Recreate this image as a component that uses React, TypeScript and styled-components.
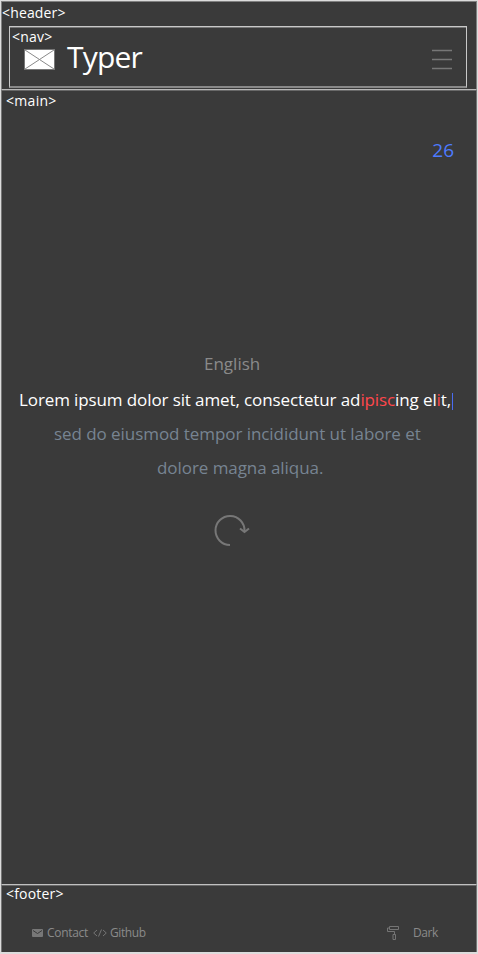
import React from "react";
import styled, { createGlobalStyle } from "styled-components";

const GlobalStyle = createGlobalStyle`
  * { box-sizing: border-box; }
  body {
    margin: 0;
    background: #3a3a3a;
    font-family: "Open Sans", "Noto Sans", sans-serif;
    color: #fff;
  }
`;

const Page = styled.div`
  width: 478px;
  height: 954px;
  display: grid;
  grid-template-rows: 88px 795px 1fr;
  border: 1px solid #dcdcdc;
  border-bottom-width: 2px;
  background: #3a3a3a;
  overflow: hidden;
`;

const Text = styled.span<{ $size: number; $spacing?: number; $color?: string; $weight?: number }>`
  font-size: ${(p) => p.$size}px;
  font-weight: ${(p) => p.$weight ?? 400};
  line-height: 1;
  letter-spacing: ${(p) => p.$spacing ?? 0}px;
  color: ${(p) => p.$color ?? "#fff"};
  white-space: nowrap;
`;

const Header = styled.header`
  border: 1px solid #808080;
  border-bottom: 0;
  padding-top: 4px;
  display: flex;
  flex-direction: column;
`;

const HeaderTag = styled(Text)`
  height: 20px;
`;

const Nav = styled.nav`
  width: 458px;
  height: 62px;
  margin-left: 7px;
  border: 1px solid #c8c8c8;
  border-bottom: 2px solid #898989;
  box-shadow: inset 0 1px #777;
  padding: 3px 13px 0 2px;
  display: grid;
  grid-template-rows: 14px 1fr;
`;

const NavRow = styled.div`
  display: flex;
  align-items: flex-start;
  padding-left: 12px;
`;

const Envelope = styled.svg`
  display: block;
  margin-top: 5px;
`;

const Brand = styled(Text)`
  margin: -2px auto 0 12px;
`;

const Menu = styled.svg`
  display: block;
  margin-top: 5px;
`;

const Main = styled.main`
  border: 1px solid #757575;
  border-top: 1px solid #b8b8b8;
  border-bottom: 0;
  box-shadow: inset 0 1px #686868;
  display: flex;
  flex-direction: column;
  padding: 4px 0 0 4px;
`;

const Counter = styled(Text)`
  align-self: flex-end;
  margin: 33px 22px 0 0;
`;

const Typing = styled.section`
  display: flex;
  flex-direction: column;
  margin-top: 195px;
`;

const Line = styled(Text)<{ $left: number; $height: number }>`
  margin-left: ${(p) => p.$left}px;
  height: ${(p) => p.$height}px;
`;

const Miss = styled.span`
  color: #ff474c;
`;

const Caret = styled.span`
  display: inline-block;
  width: 1.2px;
  height: 17px;
  margin-left: 0.5px;
  vertical-align: -4px;
  background: #4a6cf0;
`;

const Restart = styled.svg`
  display: block;
  margin: 21px 0 0 207px;
`;

const Footer = styled.footer`
  border: 1px solid #757575;
  border-top: 1px solid #c0c0c0;
  border-bottom: 0;
  box-shadow: inset 0 1px #686868;
  padding: 2px 38px 0 4px;
  display: flex;
  flex-direction: column;
`;

const FooterRow = styled.div`
  display: flex;
  align-items: center;
  margin-top: 24px;
  padding-left: 26px;
`;

const FooterLink = styled.div<{ $gap: number; $left?: string }>`
  display: flex;
  align-items: center;
  gap: ${(p) => p.$gap}px;
  margin-left: ${(p) => p.$left ?? "0"};
`;

export default function App() {
  return (
    <>
      <GlobalStyle />
      <Page>
        <Header>
          <HeaderTag $size={14} $weight={500} $spacing={0.15}>&lt;header&gt;</HeaderTag>
          <Nav>
            <Text $size={14} $weight={500} $spacing={0.25}>&lt;nav&gt;</Text>
            <NavRow>
              <Envelope width="31" height="21" viewBox="0 0 31 21">
                <rect x="0.5" y="0.5" width="30" height="20" fill="#fff" stroke="#777" />
                <path d="M1 1L30 20M30 1L1 20" stroke="#8a8a8a" fill="none" />
              </Envelope>
              <Brand $size={30} $weight={500} $spacing={-0.8}>Typer</Brand>
              <Menu width="21" height="21" viewBox="0 0 21 21">
                <path d="M0 1.5H20M0 10.5H20M0 19.5H20" stroke="#777" strokeWidth="1.3" />
              </Menu>
            </NavRow>
          </Nav>
        </Header>
        <Main>
          <Text $size={14} $weight={500} $spacing={0.3}>&lt;main&gt;</Text>
          <Counter $size={19} $weight={500} $color="#4d7bff">26</Counter>
          <Typing>
            <Line $size={17} $left={198} $height={36} $color="#8a8a8a">English</Line>
            <Line $size={17} $left={13} $height={34} $weight={500} $spacing={-0.11}>
              Lorem ipsum dolor sit amet, consectetur ad<Miss>ipisc</Miss>ing el<Miss>i</Miss>t,
              <Caret />
            </Line>
            <Line $size={17} $left={48} $height={34} $color="#778492" $spacing={-0.06}>
              sed do eiusmod tempor incididunt ut labore et
            </Line>
            <Line $size={17} $left={151} $height={34} $color="#778492" $spacing={-0.06}>dolore magna aliqua.</Line>
          </Typing>
          <Restart width="38" height="34" viewBox="0 0 38 34" fill="none" stroke="#777" strokeWidth="2">
            <path d="M17 31A14.5 14.5 0 1 1 31.5 17" />
            <path d="M27 14.5L31.5 18L36 14.5" />
          </Restart>
        </Main>
        <Footer>
          <Text $size={14} $weight={500} $spacing={0.2}>&lt;footer&gt;</Text>
          <FooterRow>
            <FooterLink $gap={4}>
              <svg width="11" height="8" viewBox="0 0 11 8">
                <rect width="11" height="8" rx="1" fill="#777" />
                <path d="M1 1.5L5.5 4.5L10 1.5" stroke="#3a3a3a" fill="none" />
              </svg>
              <Text $size={12} $color="#8a8a8a" $spacing={-0.3}>Contact</Text>
            </FooterLink>
            <FooterLink $gap={3} $left="5px">
              <svg width="14" height="8" viewBox="0 0 14 8" fill="none" stroke="#757575">
                <path d="M4 1L0.7 4L4 7M10 1L13.3 4L10 7M8.5 0.5L5.5 7.5" />
              </svg>
              <Text $size={12} $color="#8a8a8a" $spacing={-0.4}>Github</Text>
            </FooterLink>
            <FooterLink $gap={13} $left="auto">
              <svg width="13" height="15" viewBox="0 0 13 15" fill="none" stroke="#747474">
                <path d="M2.5 1.5H11.5V4.5H2.5ZM2.5 3H0.5V6.5H7.5V9M6 9.5H8.5V14.5H6Z" />
              </svg>
              <Text $size={12} $color="#8a8a8a" $spacing={-0.4}>Dark</Text>
            </FooterLink>
          </FooterRow>
        </Footer>
      </Page>
    </>
  );
}
